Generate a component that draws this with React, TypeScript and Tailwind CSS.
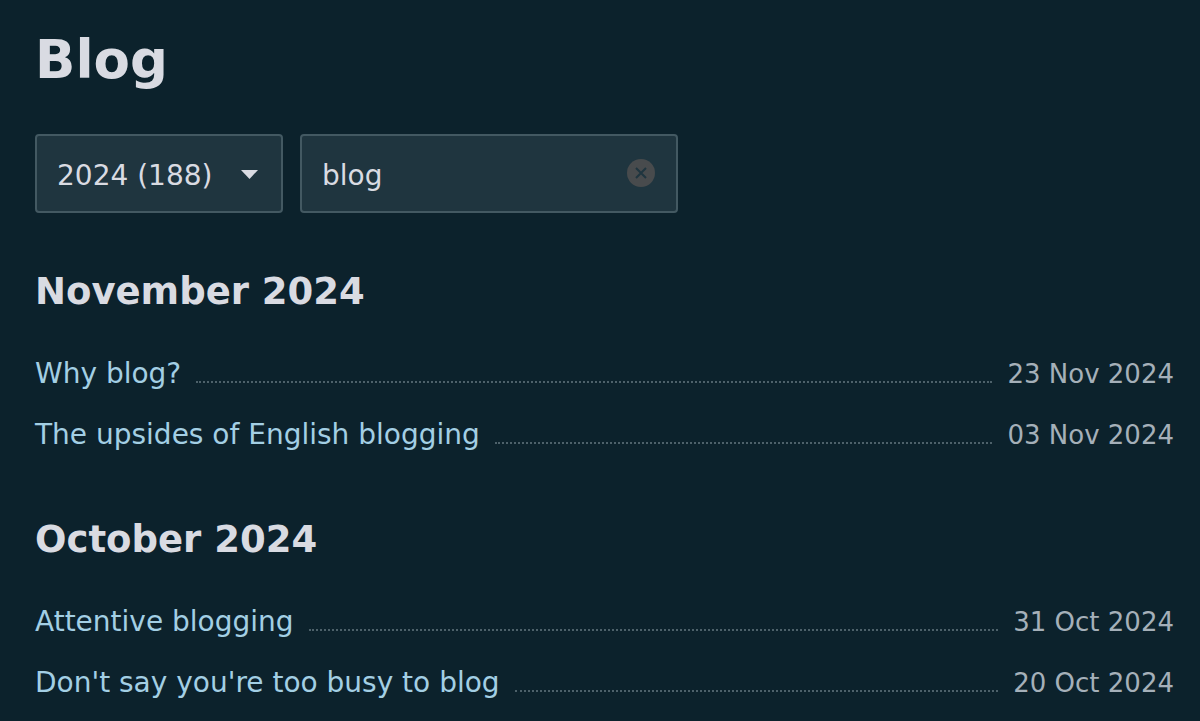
import { useState } from "react";

const years = [{ year: 2024, count: 188 }];

const months = [
  {
    label: "November 2024",
    posts: [
      { title: "Why blog?", date: "23 Nov 2024" },
      { title: "The upsides of English blogging", date: "03 Nov 2024" },
    ],
  },
  {
    label: "October 2024",
    posts: [
      { title: "Attentive blogging", date: "31 Oct 2024" },
      { title: "Don't say you're too busy to blog", date: "20 Oct 2024" },
    ],
  },
];

export default function App() {
  const [query, setQuery] = useState("blog");

  return (
    <main className="min-h-screen bg-[#0c222c] pt-6 pr-[26px] pl-[35px] font-[Verdana,'DejaVu_Sans',sans-serif] text-[#d9dbe2]">
      <h1 className="text-[53px] leading-[72px] font-bold">Blog</h1>

      <form className="mt-[38px] flex gap-[17px]" onSubmit={(e) => e.preventDefault()}>
        <div className="relative">
          <select
            aria-label="Year"
            className="h-[79px] w-[248px] appearance-none rounded-[4px] border-2 border-[#435962] bg-[#1f353f] pt-1 pl-5 text-[28px]"
          >
            {years.map(({ year, count }) => (
              <option key={year} value={year}>
                {year} ({count})
              </option>
            ))}
          </select>
          <svg
            className="pointer-events-none absolute top-9 right-6 h-[9px] w-[18px]"
            viewBox="0 0 18 9"
            fill="currentColor"
          >
            <path d="M0 0h17L8.5 9z" />
          </svg>
        </div>

        <div className="relative">
          <input
            type="text"
            aria-label="Filter posts"
            value={query}
            onChange={(e) => setQuery(e.target.value)}
            className="h-[79px] w-[378px] rounded-[4px] border-2 border-[#435962] bg-[#1f353f] pt-1 pr-16 pl-5 text-[28px]"
          />
          <button
            type="button"
            aria-label="Clear filter"
            onClick={() => setQuery("")}
            className="absolute top-[25px] right-[23px]"
          >
            <svg className="size-7" viewBox="0 0 28 28">
              <circle cx="14" cy="14" r="14" fill="#484b4d" />
              <path d="M9 9l10 10M19 9L9 19" stroke="#1f353f" strokeWidth="2" />
            </svg>
          </button>
        </div>
      </form>

      <div className="mt-[55px] flex flex-col gap-[51px]">
        {months.map(({ label, posts }) => (
          <section key={label}>
            <h2 className="text-[37px] leading-[48px] font-bold">{label}</h2>
            <ul className="mt-7 flex flex-col gap-px">
              {posts.map(({ title, date }) => (
                <li key={title} className="flex items-baseline gap-[15px] leading-[60px]">
                  <a href="#" className="text-[28px] text-[#a3cfe4]">
                    {title}
                  </a>
                  <span className="flex-1 border-b-2 border-dotted border-[#4d616a]" />
                  <time className="text-[26px] text-[#a5b0b9]">{date}</time>
                </li>
              ))}
            </ul>
          </section>
        ))}
      </div>
    </main>
  );
}
